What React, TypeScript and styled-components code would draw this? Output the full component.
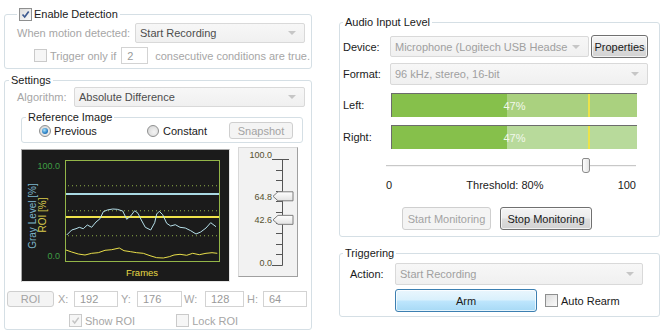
import React from 'react';
import styled, { createGlobalStyle } from 'styled-components';

const GlobalStyle = createGlobalStyle`
  html, body {
    margin: 0;
    padding: 0;
    background: #fff;
  }
  body {
    font-family: "Liberation Sans", Arial, sans-serif;
    font-size: 11px;
    color: #1a1a1a;
  }
`;

const Page = styled.div`
  display: flex;
  align-items: flex-start;
  gap: 27px;
  width: 672px;
  height: 336px;
  padding-left: 4px;
  box-sizing: border-box;
  overflow: hidden;
`;

const Column = styled.div<{ $w: number }>`
  width: ${p => p.$w}px;
  display: flex;
  flex-direction: column;
`;

const Group = styled.fieldset<{ $mt?: number; $ml?: number; $w?: number }>`
  margin: ${p => p.$mt ?? 0}px 0 0 ${p => p.$ml ?? 0}px;
  padding: 0;
  min-width: 0;
  width: ${p => (p.$w ? `${p.$w}px` : 'auto')};
  box-sizing: border-box;
  border: 1px solid #d5dfe5;
  border-radius: 3px;
`;

const Legend = styled.legend<{ $ml: number }>`
  margin-left: ${p => p.$ml}px;
  padding: 0 2px;
  height: 13px;
  line-height: 13px;
  color: #1a1a1a;
`;

const LegendInner = styled.span`
  display: inline-flex;
  align-items: center;
  gap: 2px;
  height: 13px;
`;

const GroupBody = styled.div<{ $pad: string }>`
  display: flex;
  flex-direction: column;
  padding: ${p => p.$pad};
`;

const Row = styled.div<{ $mt?: number; $h: number; $pl?: number; $gap?: number }>`
  display: flex;
  align-items: center;
  height: ${p => p.$h}px;
  margin-top: ${p => p.$mt ?? 0}px;
  padding-left: ${p => p.$pl ?? 0}px;
  gap: ${p => p.$gap ?? 0}px;
`;

const Label = styled.span<{ $w?: number; $dim?: boolean; $pl?: number }>`
  width: ${p => (p.$w ? `${p.$w}px` : 'auto')};
  padding-left: ${p => p.$pl ?? 0}px;
  box-sizing: border-box;
  flex-shrink: 0;
  white-space: nowrap;
  color: ${p => (p.$dim ? '#a6a6a6' : '#1a1a1a')};
`;

const Combo = styled.div<{ $w: number; $h: number; $dark?: boolean }>`
  box-sizing: border-box;
  width: ${p => p.$w}px;
  height: ${p => p.$h}px;
  flex-shrink: 0;
  display: flex;
  align-items: center;
  padding-left: 4px;
  border: 1px solid #d9d9d9;
  border-radius: 2px;
  background: linear-gradient(#f7f7f7, #f0f0f0);
  color: ${p => (p.$dark ? '#4d4d4d' : '#a0a0a0')};
  &::after {
    content: '';
    flex-shrink: 0;
    margin: 0 8px 0 6px;
    border-left: 4px solid transparent;
    border-right: 4px solid transparent;
    border-top: 4px solid #c6c6c6;
  }
`;

const ComboText = styled.span`
  flex: 1;
  min-width: 0;
  white-space: nowrap;
`;

const Button = styled.button<{ $w: number; $h: number; $disabled?: boolean; $primary?: boolean; $ml?: number }>`
  box-sizing: border-box;
  width: ${p => p.$w}px;
  height: ${p => p.$h}px;
  margin: 0 0 0 ${p => p.$ml ?? 0}px;
  padding: 0;
  flex-shrink: 0;
  font-family: "Liberation Sans", Arial, sans-serif;
  font-size: 11px;
  font-weight: 400;
  border-radius: 3px;
  border: 1px solid ${p => (p.$disabled ? '#cfcfcf' : p.$primary ? '#3c7fb1' : '#707070')};
  background: ${p =>
    p.$disabled
      ? '#f4f4f4'
      : p.$primary
      ? 'linear-gradient(#eaf6fd 0%, #d9f0fc 48%, #bee6fd 52%, #a7d9f5 100%)'
      : 'linear-gradient(#f4f4f4 0%, #ececec 48%, #dddddd 52%, #d2d2d2 100%)'};
  color: ${p => (p.$disabled ? '#a3a3a3' : '#1a1a1a')};
  box-shadow: ${p => (p.$disabled ? 'none' : 'inset 0 0 0 1px rgba(255,255,255,0.7)')};
`;

const Field = styled.div<{ $w: number; $h: number }>`
  box-sizing: border-box;
  width: ${p => p.$w}px;
  height: ${p => p.$h}px;
  flex-shrink: 0;
  display: flex;
  align-items: center;
  padding-left: 5px;
  border: 1px solid #d3d3d3;
  background: #fff;
  color: #999;
`;

const CheckBox = styled.span<{ $disabled?: boolean }>`
  box-sizing: border-box;
  width: 13px;
  height: 13px;
  flex-shrink: 0;
  display: flex;
  align-items: center;
  justify-content: center;
  border: 1px solid ${p => (p.$disabled ? '#cacaca' : '#8e8f8f')};
  background: ${p => (p.$disabled ? '#f6f6f6' : 'linear-gradient(135deg, #dcdcdc, #fbfbfb)')};
`;

const CheckItem = styled.span<{ $gap?: number }>`
  display: inline-flex;
  align-items: center;
  gap: ${p => p.$gap ?? 3}px;
`;

const Radio = styled.span<{ $on?: boolean }>`
  box-sizing: border-box;
  width: 12px;
  height: 12px;
  border-radius: 50%;
  flex-shrink: 0;
  display: flex;
  align-items: center;
  justify-content: center;
  border: 1px solid #8e8f8f;
  background: radial-gradient(circle at 60% 60%, #f4f4f4, #d2d2d2);
  &::after {
    content: '';
    display: ${p => (p.$on ? 'block' : 'none')};
    width: 6px;
    height: 6px;
    border-radius: 50%;
    background: radial-gradient(circle at 40% 35%, #a6e1fb, #2a7fc3 60%, #1b5c97);
  }
`;

const RadioGrid = styled.div`
  display: grid;
  grid-template-columns: 108px 82px 64px;
  align-items: center;
  height: 17px;
  margin-top: -2px;
  padding-left: 17px;
`;

const ChartRow = styled.div`
  display: flex;
  align-items: flex-start;
  gap: 8px;
  margin: 6px 0 0 16px;
`;

const ChartFrame = styled.div`
  width: 209px;
  height: 133px;
  box-sizing: border-box;
  border: 1px solid;
  border-color: #a8a8a8 #e6e6e6 #e6e6e6 #a8a8a8;
  background: #1b1b1b;
  svg {
    display: block;
  }
`;

const SliderBox = styled.div`
  width: 60px;
  height: 130px;
  margin-top: -2px;
  box-sizing: border-box;
  border: 1px solid;
  border-color: #d8d8d8 #a0a0a0 #a0a0a0 #d8d8d8;
  background: #f2f2f2;
  svg {
    display: block;
  }
`;

const Meter = styled.div`
  position: relative;
  width: 246px;
  height: 24px;
  box-sizing: border-box;
  display: flex;
  border-top: 1px solid #6c6c6c;
  border-left: 1px solid #6c6c6c;
  margin-left: 1px;
`;

const MeterFill = styled.div<{ $light?: boolean; $tone?: string }>`
  height: 100%;
  flex: ${p => (p.$light ? 1 : 'none')};
  background: ${p => p.$tone};
`;

const MeterMark = styled.div`
  position: absolute;
  top: 0;
  bottom: 0;
  width: 2px;
  background: #ebe34a;
`;

const MeterText = styled.span`
  position: absolute;
  inset: 0;
  display: flex;
  align-items: center;
  justify-content: center;
  color: #f2f8ec;
`;

const Track = styled.div`
  position: relative;
  width: 250px;
  height: 16px;
  margin: 9px 0 0 43px;
  display: flex;
  align-items: center;
`;

const TrackLine = styled.div`
  flex: 1;
  height: 0;
  border-top: 1px solid #c8c8c8;
  border-bottom: 1px solid #f4f4f4;
`;

const Thumb = styled.div`
  position: absolute;
  top: 0;
  width: 8px;
  height: 15px;
  box-sizing: border-box;
  border: 1px solid #8a8a8a;
  border-radius: 2px 2px 3px 3px;
  background: linear-gradient(90deg, #fdfdfd, #e4e4e4);
`;

const Scale = styled.div`
  display: flex;
  justify-content: space-between;
  width: 250px;
  height: 13px;
  line-height: 13px;
  margin: 5px 0 0 43px;
`;

const Tick = () => (
  <svg width="9" height="9" viewBox="0 0 9 9">
    <path d="M1.5 4.5 L3.7 7 L7.7 1.6" fill="none" stroke="#3d5a90" strokeWidth="1.7" />
  </svg>
);

const DimTick = () => (
  <svg width="9" height="9" viewBox="0 0 9 9">
    <path d="M1.5 4.5 L3.7 7 L7.7 1.6" fill="none" stroke="#c4c4c4" strokeWidth="1.5" />
  </svg>
);

// trace samples read off the reference plot (3x zoom coordinates)
const cyanRaw = [
  [200, 285], [215, 270], [228, 266], [238, 262], [250, 266], [262, 255], [275, 262], [288, 246],
  [300, 236], [310, 215], [322, 210], [338, 207], [352, 208], [368, 213], [380, 238], [392, 228],
  [404, 212], [414, 220], [424, 240], [436, 262], [452, 270], [464, 248], [470, 222], [478, 214],
  [488, 224], [500, 250], [512, 258], [526, 254], [540, 262], [556, 264], [572, 272], [588, 282],
  [602, 276], [618, 264], [632, 248], [648, 260],
];
const yellowRaw = [
  [198, 330], [215, 336], [235, 342], [255, 345], [275, 340], [295, 338], [315, 331], [335, 329],
  [358, 324], [372, 332], [392, 335], [410, 338], [430, 340], [450, 347], [470, 353], [490, 354],
  [508, 350], [522, 345], [540, 343], [560, 346], [578, 340], [598, 344], [618, 340], [636, 338],
  [652, 340],
];
const toSvg = (pts: number[][]) =>
  pts.map(([x, y]) => `${(x / 3 - 22).toFixed(1)},${(y / 3 - 10).toFixed(1)}`).join(' ');

function ChartPlot() {
  const dots = [35.75, 60.75, 85.75];
  return (
    <ChartFrame>
      <svg width="207" height="131" fontFamily="Liberation Sans, Arial, sans-serif">
        <rect x="43.5" y="10.5" width="154" height="101" fill="none" stroke="#93b548" />
        {dots.map(y => (
          <line key={y} x1="46" x2="196" y1={y} y2={y} stroke="#8fae4a" strokeDasharray="1 3" />
        ))}
        <line x1="44" x2="197" y1="44" y2="44" stroke="#a9d9e3" strokeWidth="2" />
        <line x1="44" x2="197" y1="67" y2="67" stroke="#efe34a" strokeWidth="2" />
        <polyline points={toSvg(cyanRaw)} fill="none" stroke="#b6e0ea" strokeWidth="1" />
        <polyline points={toSvg(yellowRaw)} fill="none" stroke="#e8de4a" strokeWidth="1" />
        <text x="38" y="19" fontSize="9" fill="#3f9e44" textAnchor="end">100.0</text>
        <text x="38" y="109" fontSize="9" fill="#3f9e44" textAnchor="end">0.0</text>
        <text x="120" y="126" fontSize="9.5" fill="#e7da45" textAnchor="middle">Frames</text>
        <text transform="translate(14 66) rotate(-90)" fontSize="10" fill="#7eb6cc" textAnchor="middle">
          Gray Level [%]
        </text>
        <text transform="translate(24 65) rotate(-90)" fontSize="10" fill="#d9cb4c" textAnchor="middle">
          ROI [%]
        </text>
      </svg>
    </ChartFrame>
  );
}

function RangeSlider() {
  const top = 11;
  const bottom = 117;
  const ticks = Array.from({ length: 11 }, (_, i) => top + ((bottom - top) * i) / 10);
  const yFor = (v: number) => bottom - ((bottom - top) * v) / 100;
  const thumb = (v: number) => {
    const c = yFor(v);
    return `M34 ${c} L39 ${c - 4.5} L54 ${c - 4.5} L54 ${c + 4.5} L39 ${c + 4.5} Z`;
  };
  return (
    <SliderBox>
      <svg width="58" height="128" fontFamily="Liberation Sans, Arial, sans-serif">
        <defs>
          <linearGradient id="th" x1="0" x2="0" y1="0" y2="1">
            <stop offset="0" stopColor="#ffffff" />
            <stop offset="1" stopColor="#e2e2e2" />
          </linearGradient>
        </defs>
        <line x1="43.5" x2="43.5" y1={top} y2={bottom} stroke="#555" />
        {ticks.map(y => (
          <line key={y} x1="37" x2="43.5" y1={Math.round(y) + 0.5} y2={Math.round(y) + 0.5} stroke="#555" />
        ))}
        <line x1="33" x2="50" y1={top + 0.5} y2={top + 0.5} stroke="#555" />
        <line x1="33" x2="43.5" y1={bottom + 0.5} y2={bottom + 0.5} stroke="#555" />
        <text x="33" y="10" fontSize="9" fill="#55502f" textAnchor="end">100.0</text>
        <text x="33" y={yFor(64.8) + 3.5} fontSize="9" fill="#55502f" textAnchor="end">64.8</text>
        <text x="33" y={yFor(42.6) + 3.5} fontSize="9" fill="#55502f" textAnchor="end">42.6</text>
        <text x="33" y="118" fontSize="9" fill="#55502f" textAnchor="end">0.0</text>
        <path d={thumb(64.8)} fill="url(#th)" stroke="#7d7d7d" />
        <path d={thumb(42.6)} fill="url(#th)" stroke="#7d7d7d" />
      </svg>
    </SliderBox>
  );
}

function LevelBar({ level, mark, light }: { level: number; mark: number; light: string }) {
  return (
    <Meter>
      <MeterFill $tone="#86c04b" style={{ width: `${level}%` }} />
      <MeterFill $light $tone={light} />
      <MeterMark style={{ left: `${mark}%` }} />
      <MeterText>{level}%</MeterText>
    </Meter>
  );
}

export default function App() {
  const threshold = 80;
  return (
    <>
      <GlobalStyle />
      <Page>
        <Column $w={308}>
          <Group $mt={8}>
            <Legend $ml={12}>
              <LegendInner>
                <CheckBox>
                  <Tick />
                </CheckBox>
                Enable Detection
              </LegendInner>
            </Legend>
            <GroupBody $pad="0 6px 4px 12px">
              <Row $mt={2} $h={20}>
                <Label $w={118} $dim>When motion detected:</Label>
                <Combo $w={170} $h={20} $dark>
                  <ComboText>Start Recording</ComboText>
                </Combo>
              </Row>
              <Row $mt={4} $h={17} $pl={17}>
                <CheckItem>
                  <CheckBox $disabled />
                  <Label $dim>Trigger only if</Label>
                </CheckItem>
                <Field $w={27} $h={17} style={{ marginLeft: 5 }}>2</Field>
                <Label $dim $pl={7}>consecutive conditions are true.</Label>
              </Row>
            </GroupBody>
          </Group>

          <Group $mt={5}>
            <Legend $ml={4}>Settings</Legend>
            <GroupBody $pad="0 0 2px 0">
              <Row $h={20} $pl={12}>
                <Label $w={57} $dim>Algorithm:</Label>
                <Combo $w={231} $h={20} $dark>
                  <ComboText>Absolute Difference</ComboText>
                </Combo>
              </Row>

              <Group $mt={4} $ml={16} $w={282}>
                <Legend $ml={4}>Reference Image</Legend>
                <GroupBody $pad="0 0 3px 0">
                  <RadioGrid>
                    <CheckItem>
                      <Radio $on />
                      Previous
                    </CheckItem>
                    <CheckItem $gap={4}>
                      <Radio />
                      Constant
                    </CheckItem>
                    <Button $w={64} $h={17} $disabled>Snapshot</Button>
                  </RadioGrid>
                </GroupBody>
              </Group>

              <ChartRow>
                <ChartPlot />
                <RangeSlider />
              </ChartRow>

              <Row $mt={9} $h={16} $pl={2}>
                <Button $w={47} $h={16} $disabled>ROI</Button>
                <Label $w={20} $pl={4} $dim>X:</Label>
                <Field $w={44} $h={16}>192</Field>
                <Label $w={19} $pl={3} $dim>Y:</Label>
                <Field $w={45} $h={16}>176</Field>
                <Label $w={23} $pl={2} $dim>W:</Label>
                <Field $w={39} $h={16}>128</Field>
                <Label $w={19} $pl={3} $dim>H:</Label>
                <Field $w={44} $h={16}>64</Field>
              </Row>

              <Row $mt={7} $h={13} $pl={64}>
                <CheckItem>
                  <CheckBox $disabled>
                    <DimTick />
                  </CheckBox>
                  <Label $dim>Show ROI</Label>
                </CheckItem>
                <CheckItem style={{ marginLeft: 41 }}>
                  <CheckBox $disabled />
                  <Label $dim>Lock ROI</Label>
                </CheckItem>
              </Row>
            </GroupBody>
          </Group>
        </Column>

        <Column $w={321}>
          <Group $mt={16}>
            <Legend $ml={3}>Audio Input Level</Legend>
            <GroupBody $pad="0 0 6px 3px">
              <Row $mt={6} $h={23}>
                <Label $w={47}>Device:</Label>
                <Combo $w={199} $h={21}>
                  <ComboText>Microphone (Logitech USB Headse</ComboText>
                </Combo>
                <Button $w={57} $h={23} $ml={2}>Properties</Button>
              </Row>
              <Row $mt={5} $h={22}>
                <Label $w={47}>Format:</Label>
                <Combo $w={258} $h={22}>
                  <ComboText>96 kHz, stereo, 16-bit</ComboText>
                </Combo>
              </Row>
              <Row $mt={8} $h={24}>
                <Label $w={47}>Left:</Label>
                <LevelBar level={47} mark={threshold} light="#aad17f" />
              </Row>
              <Row $mt={8} $h={24}>
                <Label $w={47}>Right:</Label>
                <LevelBar level={47} mark={threshold} light="#b8da9b" />
              </Row>
              <Track>
                <TrackLine />
                <Thumb style={{ left: `calc(${threshold}% - 4px)` }} />
              </Track>
              <Scale>
                <span>0</span>
                <span>Threshold: {threshold}%</span>
                <span>100</span>
              </Scale>
              <Row $mt={15} $h={23} $pl={59} $gap={9}>
                <Button $w={89} $h={23} $disabled>Start Monitoring</Button>
                <Button $w={92} $h={23}>Stop Monitoring</Button>
              </Row>
            </GroupBody>
          </Group>

          <Group $mt={10}>
            <Legend $ml={3}>Triggering</Legend>
            <GroupBody $pad="0 0 4px 10px">
              <Row $mt={3} $h={22}>
                <Label $w={45}>Action:</Label>
                <Combo $w={248} $h={22}>
                  <ComboText>Start Recording</ComboText>
                </Combo>
              </Row>
              <Row $mt={4} $h={23} $pl={45}>
                <Button $w={142} $h={23} $primary>Arm</Button>
                <CheckItem style={{ marginLeft: 8 }}>
                  <CheckBox />
                  Auto Rearm
                </CheckItem>
              </Row>
            </GroupBody>
          </Group>
        </Column>
      </Page>
    </>
  );
}
